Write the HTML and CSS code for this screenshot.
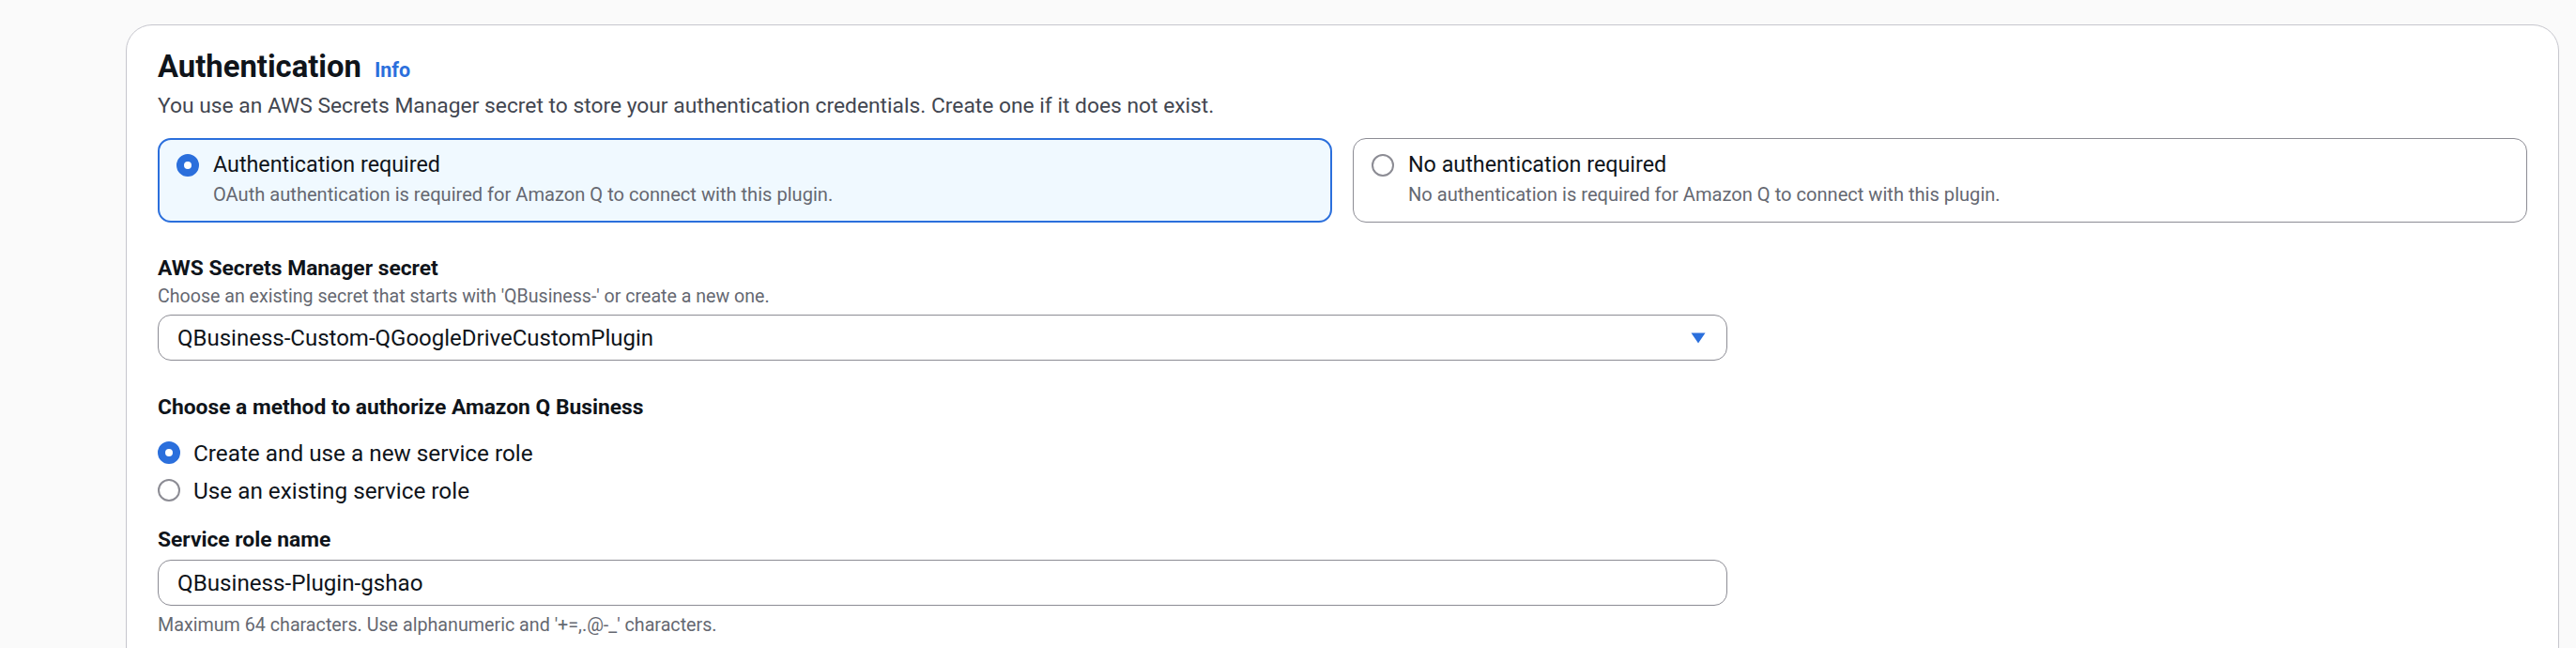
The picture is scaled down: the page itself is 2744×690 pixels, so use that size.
FILE: index.html
```html
<!DOCTYPE html>
<html lang="en">
<head>
<meta charset="utf-8">
<title>Authentication</title>
<link rel="stylesheet" href="styles.css">
</head>
<body>
<div class="page">
  <section class="card">
    <header class="card-header">
      <h2 class="title">Authentication<a class="info" href="#">Info</a></h2>
      <p class="desc">You use an AWS Secrets Manager secret to store your authentication credentials. Create one if it does not exist.</p>
    </header>

    <div class="tiles">
      <div class="tile tile-selected">
        <span class="radio-wrap"><span class="radio radio-checked"></span></span>
        <div class="tile-text">
          <div class="tile-label">Authentication required</div>
          <div class="tile-desc">OAuth authentication is required for Amazon Q to connect with this plugin.</div>
        </div>
      </div>
      <div class="tile">
        <span class="radio-wrap"><span class="radio"></span></span>
        <div class="tile-text">
          <div class="tile-label">No authentication required</div>
          <div class="tile-desc">No authentication is required for Amazon Q to connect with this plugin.</div>
        </div>
      </div>
    </div>

    <div class="field field-secret">
      <div class="label">AWS Secrets Manager secret</div>
      <div class="hint">Choose an existing secret that starts with 'QBusiness-' or create a new one.</div>
      <div class="select">
        <span class="select-value">QBusiness-Custom-QGoogleDriveCustomPlugin</span>
        <svg class="caret" width="16" height="12" viewBox="0 0 16 12"><path d="M0.5 0.5 H15.5 L8 11.5 Z" fill="#2b6fdc"/></svg>
      </div>
    </div>

    <div class="field field-method">
      <div class="label">Choose a method to authorize Amazon Q Business</div>
      <div class="radio-group">
        <div class="radio-row"><span class="radio radio-checked"></span><span class="radio-text">Create and use a new service role</span></div>
        <div class="radio-row"><span class="radio"></span><span class="radio-text">Use an existing service role</span></div>
      </div>
    </div>

    <div class="field field-role">
      <div class="label">Service role name</div>
      <div class="input">QBusiness-Plugin-gshao</div>
      <div class="hint hint-after">Maximum 64 characters. Use alphanumeric and '+=,.@-_' characters.</div>
    </div>
  </section>
</div>
</body>
</html>
```

FILE: styles.css
```css
* { box-sizing: border-box; }

html, body {
  margin: 0;
  padding: 0;
  background: #fafafa;
}

body {
  font-family: Roboto, "Liberation Sans", Arial, sans-serif;
  color: #0f141a;
}

.page {
  height: 690px;
  overflow: hidden;
  padding: 26px 18px 0 134px;
}

.card {
  background: #ffffff;
  border: 1px solid #c6c6cd;
  border-radius: 28px;
  padding: 24px 33px 40px 33px;
  min-height: 720px;
}

.title {
  margin: 0;
  font-size: 32.8px;
  line-height: 40px;
  font-weight: 700;
  color: #0f141a;
}

.info {
  margin-left: 14px;
  font-size: 21.5px;
  font-weight: 700;
  color: #2b6fdc;
  text-decoration: none;
}

.desc {
  margin: 0;
  font-size: 22.8px;
  line-height: 35px;
  color: #424650;
}

.tiles {
  margin-top: 17px;
  display: grid;
  grid-template-columns: 1fr 1fr;
  gap: 22px;
}

.tile {
  height: 90px;
  border: 1px solid #8c8c94;
  border-radius: 14px;
  padding: 10px 16px 0 19px;
  display: flex;
  gap: 15px;
  background: #ffffff;
}

.tile-selected {
  border: 2px solid #2b6fdc;
  background: #f0f9ff;
  padding: 9px 16px 0 18px;
}

.radio-wrap {
  height: 35px;
  display: flex;
  align-items: center;
}

.radio {
  flex: none;
  width: 24px;
  height: 24px;
  border-radius: 50%;
  border: 2px solid #8c8c94;
  background: #ffffff;
  display: inline-block;
}

.radio-checked {
  border: 8px solid #2b6fdc;
  background: #ffffff;
}

.tile-label {
  font-size: 23.3px;
  line-height: 35px;
  color: #0f141a;
}

.tile-desc {
  font-size: 20.1px;
  line-height: 28px;
  color: #656871;
}

.label {
  font-size: 22.8px;
  line-height: 32px;
  font-weight: 700;
  color: #0f141a;
}

.hint {
  font-size: 19.6px;
  line-height: 28px;
  color: #656871;
}

.field-secret { margin-top: 33px; }

.select,
.input {
  width: 1672px;
  height: 49px;
  border: 1px solid #8c8c94;
  border-radius: 14px;
  padding: 0 22px 0 20px;
  display: flex;
  align-items: center;
  font-size: 24px;
  color: #0f141a;
  background: #ffffff;
}

.select {
  margin-top: 5px;
  justify-content: space-between;
}

.caret { flex: none; }

.field-method { margin-top: 34px; }

.radio-group {
  margin-top: 12px;
  display: flex;
  flex-direction: column;
}

.radio-row {
  height: 40px;
  display: flex;
  align-items: center;
  gap: 14px;
}

.radio-text {
  font-size: 24.3px;
  color: #0f141a;
}

.field-role { margin-top: 17px; }

.input { margin-top: 5px; font-size: 24.2px; }

.hint-after { margin-top: 7px; font-size: 19.7px; }
```
